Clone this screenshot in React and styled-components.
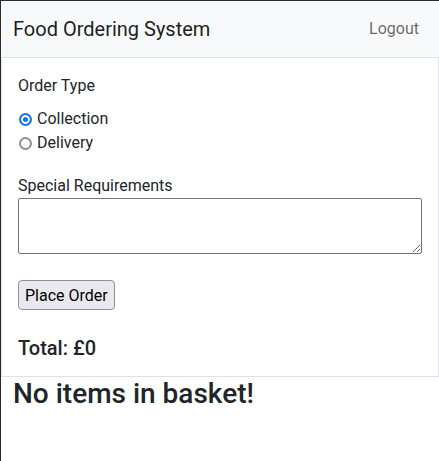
import React, { useState } from "react";
import styled, { createGlobalStyle } from "styled-components";

const GlobalStyle = createGlobalStyle`
  html, body {
    margin: 0;
    padding: 0;
    background: #fff;
  }
  body {
    font-family: Roboto, "Liberation Sans", Arial, sans-serif;
    color: #212529;
    font-size: 16px;
    line-height: 1.5;
  }
  * {
    box-sizing: border-box;
  }
`;

const Frame = styled.div`
  min-height: 100vh;
  border-top: 1px solid #2b2b2b;
  border-left: 1px solid #2b2b2b;
`;

const Navbar = styled.nav`
  display: flex;
  align-items: center;
  justify-content: space-between;
  height: 56px;
  padding: 0 12px;
  background-color: #f8f9fa;
`;

const Brand = styled.span`
  font-size: 20px;
  line-height: 30px;
  color: rgba(0, 0, 0, 0.9);
`;

const NavLink = styled.a`
  padding: 8px;
  font-size: 16px;
  color: rgba(0, 0, 0, 0.6);
  text-decoration: none;
`;

const Card = styled.form`
  display: flex;
  flex-direction: column;
  padding: 16px;
  border: 1px solid #dee2e6;
`;

const Label = styled.label`
  display: block;
  line-height: 24px;
  margin-bottom: ${(p) => p.$mb || 0}px;
`;

const RadioRow = styled.label`
  display: flex;
  align-items: center;
  gap: 5px;
  height: 24px;
  padding-left: 1px;
`;

const Radio = styled.input.attrs({ type: "radio" })`
  appearance: none;
  margin: 0;
  width: 13px;
  height: 13px;
  border-radius: 50%;
  border: 2px solid #8e8e93;
  background: #fff;

  &:checked {
    border-color: #1a73e8;
    box-shadow: inset 0 0 0 2px #fff;
    background: #1a73e8;
  }
`;

const Section = styled.div`
  margin-top: ${(p) => p.$mt || 0}px;
`;

const TextArea = styled.textarea`
  display: block;
  width: 100%;
  height: 56px;
  border: 1px solid #767676;
  border-radius: 2px;
  resize: vertical;
  font: inherit;
`;

const Button = styled.button`
  align-self: flex-start;
  height: 30px;
  padding: 0 6px;
  font-family: inherit;
  font-size: 16px;
  color: #000;
  background: #e9e9ed;
  border: 1px solid #8f8f9d;
  border-radius: 4px;
`;

const Total = styled.h5`
  margin: 26px 0 0;
  font-size: 20px;
  font-weight: 500;
  line-height: 24px;
`;

const Empty = styled.h3`
  margin: 0;
  padding-left: 12px;
  font-size: 28px;
  font-weight: 500;
  line-height: 1.2;
`;

export default function App() {
  const [orderType, setOrderType] = useState("collection");

  return (
    <Frame>
      <GlobalStyle />
      <Navbar>
        <Brand>Food Ordering System</Brand>
        <NavLink href="#">Logout</NavLink>
      </Navbar>
      <Card onSubmit={(e) => e.preventDefault()}>
        <Label $mb={9}>Order Type</Label>
        <RadioRow>
          <Radio
            name="type"
            checked={orderType === "collection"}
            onChange={() => setOrderType("collection")}
          />
          Collection
        </RadioRow>
        <RadioRow>
          <Radio
            name="type"
            checked={orderType === "delivery"}
            onChange={() => setOrderType("delivery")}
          />
          Delivery
        </RadioRow>
        <Section $mt={19}>
          <Label>Special Requirements</Label>
          <TextArea />
        </Section>
        <Section $mt={26}>
          <Button type="submit">Place Order</Button>
        </Section>
        <Total>Total: £0</Total>
      </Card>
      <Empty>No items in basket!</Empty>
    </Frame>
  );
}
